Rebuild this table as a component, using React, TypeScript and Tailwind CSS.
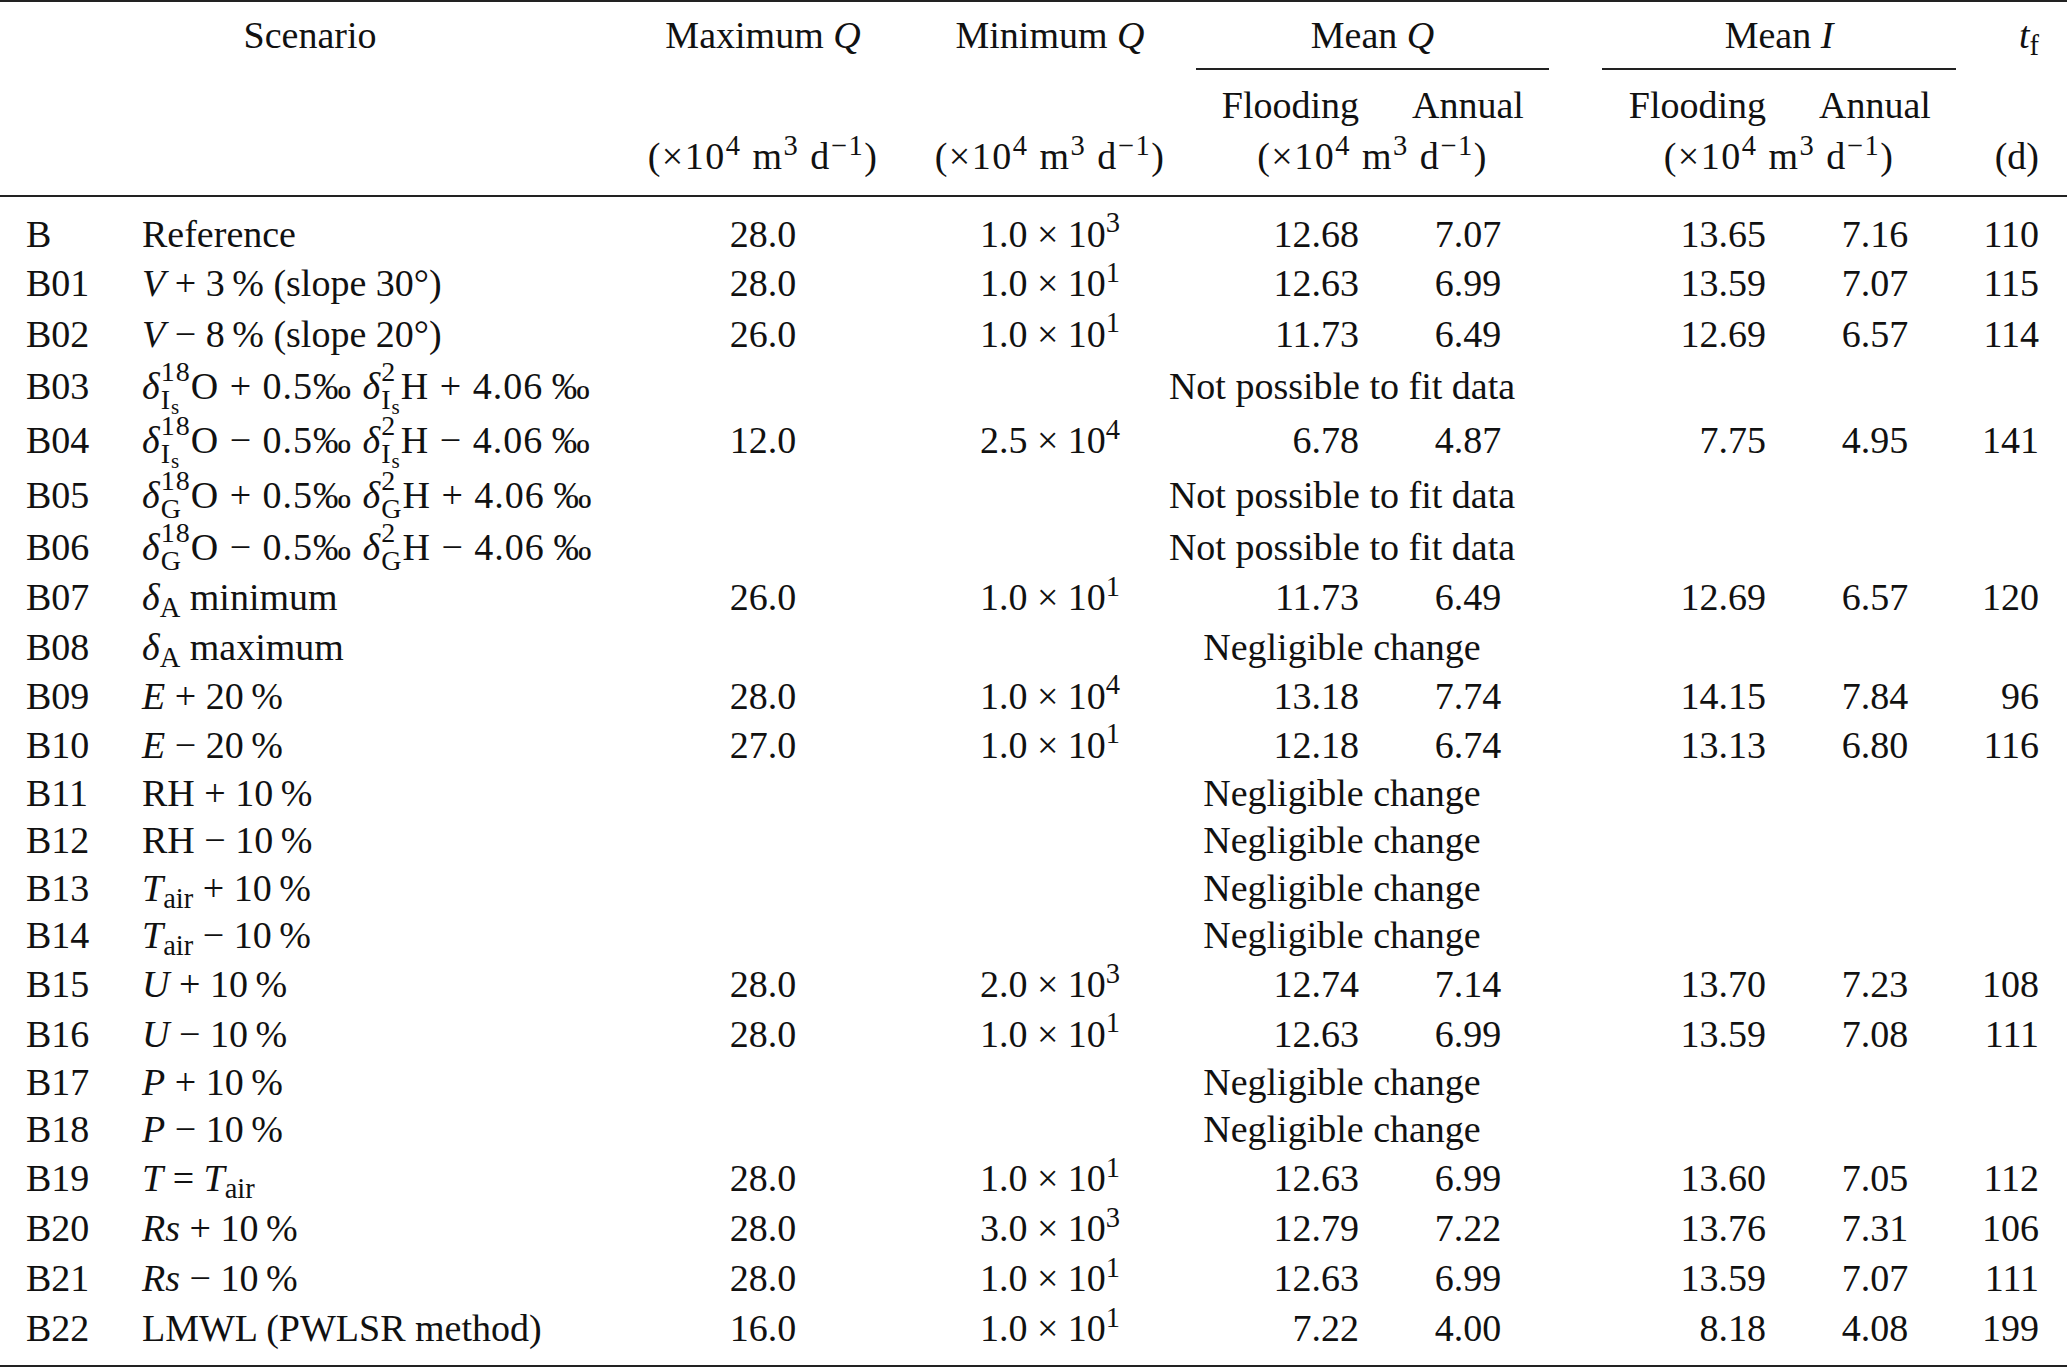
import type { ReactNode } from "react";

const grid =
  "grid grid-cols-[142px_498px_246px_310px_184px_176px_46px_185px_176px_104px]";

function Stack({ sup, sub }: { sup: ReactNode; sub: ReactNode }) {
  return (
    <span className="-my-[10px] inline-flex flex-col items-start gap-[1px] align-[18px] text-[28px] leading-[27px] not-italic">
      <span>{sup}</span>
      <span>{sub}</span>
    </span>
  );
}

const Is = (
  <>
    I<sub>s</sub>
  </>
);

function sci(m: string, e: string) {
  return (
    <span>
      {m} × 10<sup>{e}</sup>
    </span>
  );
}

const units = (
  <span className="tracking-[1.5px]">
    (×10<sup>4</sup> m<sup>3</sup> d<sup>−1</sup>)
  </span>
);

type Row = {
  id: string;
  s: ReactNode;
  h: number;
  v?: [string, ReactNode, string, string, string, string, string];
  note?: string;
};

const NP = "Not possible to fit data";
const NC = "Negligible change";

function Iso({ sub, sign }: { sub: ReactNode; sign: string }) {
  return (
    <span className="tracking-[1px]">
      <i>δ</i>
      <Stack sup="18" sub={sub} />O {sign} 0.5‰ <i>δ</i>
      <Stack sup="2" sub={sub} />H {sign} 4.06{"\u2009"}‰
    </span>
  );
}

const rows: Row[] = [
  { id: "B", s: "Reference", h: 49, v: ["28.0", sci("1.0", "3"), "12.68", "7.07", "13.65", "7.16", "110"] },
  {
    id: "B01",
    s: (
      <>
        <i>V</i> + 3{"\u2009"}% (slope 30°)
      </>
    ),
    h: 50,
    v: ["28.0", sci("1.0", "1"), "12.63", "6.99", "13.59", "7.07", "115"],
  },
  {
    id: "B02",
    s: (
      <>
        <i>V</i> − 8{"\u2009"}% (slope 20°)
      </>
    ),
    h: 51,
    v: ["26.0", sci("1.0", "1"), "11.73", "6.49", "12.69", "6.57", "114"],
  },
  { id: "B03", s: <Iso sub={Is} sign="+" />, h: 53, note: NP },
  {
    id: "B04",
    s: <Iso sub={Is} sign="−" />,
    h: 56,
    v: ["12.0", sci("2.5", "4"), "6.78", "4.87", "7.75", "4.95", "141"],
  },
  { id: "B05", s: <Iso sub="G" sign="+" />, h: 53, note: NP },
  { id: "B06", s: <Iso sub="G" sign="−" />, h: 51, note: NP },
  {
    id: "B07",
    s: (
      <>
        <i>δ</i>
        <sub>A</sub> minimum
      </>
    ),
    h: 50,
    v: ["26.0", sci("1.0", "1"), "11.73", "6.49", "12.69", "6.57", "120"],
  },
  {
    id: "B08",
    s: (
      <>
        <i>δ</i>
        <sub>A</sub> maximum
      </>
    ),
    h: 49,
    note: NC,
  },
  {
    id: "B09",
    s: (
      <>
        <i>E</i> + 20{"\u2009"}%
      </>
    ),
    h: 49,
    v: ["28.0", sci("1.0", "4"), "13.18", "7.74", "14.15", "7.84", "96"],
  },
  {
    id: "B10",
    s: (
      <>
        <i>E</i> − 20{"\u2009"}%
      </>
    ),
    h: 49,
    v: ["27.0", sci("1.0", "1"), "12.18", "6.74", "13.13", "6.80", "116"],
  },
  { id: "B11", s: <>RH + 10{"\u2009"}%</>, h: 47, note: NC },
  { id: "B12", s: <>RH − 10{"\u2009"}%</>, h: 48, note: NC },
  {
    id: "B13",
    s: (
      <>
        <i>T</i>
        <sub>air</sub> + 10{"\u2009"}%
      </>
    ),
    h: 47,
    note: NC,
  },
  {
    id: "B14",
    s: (
      <>
        <i>T</i>
        <sub>air</sub> − 10{"\u2009"}%
      </>
    ),
    h: 48,
    note: NC,
  },
  {
    id: "B15",
    s: (
      <>
        <i>U</i> + 10{"\u2009"}%
      </>
    ),
    h: 50,
    v: ["28.0", sci("2.0", "3"), "12.74", "7.14", "13.70", "7.23", "108"],
  },
  {
    id: "B16",
    s: (
      <>
        <i>U</i> − 10{"\u2009"}%
      </>
    ),
    h: 49,
    v: ["28.0", sci("1.0", "1"), "12.63", "6.99", "13.59", "7.08", "111"],
  },
  {
    id: "B17",
    s: (
      <>
        <i>P</i> + 10{"\u2009"}%
      </>
    ),
    h: 47,
    note: NC,
  },
  {
    id: "B18",
    s: (
      <>
        <i>P</i> − 10{"\u2009"}%
      </>
    ),
    h: 48,
    note: NC,
  },
  {
    id: "B19",
    s: (
      <>
        <i>T</i> = <i>T</i>
        <sub>air</sub>
      </>
    ),
    h: 50,
    v: ["28.0", sci("1.0", "1"), "12.63", "6.99", "13.60", "7.05", "112"],
  },
  {
    id: "B20",
    s: (
      <>
        <i>Rs</i> + 10{"\u2009"}%
      </>
    ),
    h: 50,
    v: ["28.0", sci("3.0", "3"), "12.79", "7.22", "13.76", "7.31", "106"],
  },
  {
    id: "B21",
    s: (
      <>
        <i>Rs</i> − 10{"\u2009"}%
      </>
    ),
    h: 50,
    v: ["28.0", sci("1.0", "1"), "12.63", "6.99", "13.59", "7.07", "111"],
  },
  { id: "B22", s: "LMWL (PWLSR method)", h: 50, v: ["16.0", sci("1.0", "1"), "7.22", "4.00", "8.18", "4.08", "199"] },
];

function BodyRow({ row }: { row: Row }) {
  return (
    <div className={`${grid} items-center leading-[44px]`} style={{ height: row.h }}>
      <div className="col-start-1 pl-[26px]">{row.id}</div>
      <div className="col-start-2">{row.s}</div>
      {row.v ? (
        <>
          <div className="col-start-3 text-center">{row.v[0]}</div>
          <div className="col-start-4 pl-[18px] text-center">{row.v[1]}</div>
          <div className="col-start-5 pr-[21px] text-right">{row.v[2]}</div>
          <div className="col-start-6 text-center">{row.v[3]}</div>
          <div className="col-start-8 pr-[21px] text-right">{row.v[4]}</div>
          <div className="col-start-9 text-center">{row.v[5]}</div>
          <div className="col-start-10 pr-[28px] text-right">{row.v[6]}</div>
        </>
      ) : (
        <div className="col-start-5 col-span-2 flex justify-center pr-[68px]">
          <span className="shrink-0">{row.note}</span>
        </div>
      )}
    </div>
  );
}

export default function App() {
  return (
    <div className="h-[1370px] w-[2067px] overflow-hidden bg-white font-['Liberation_Serif',serif] text-[38px] whitespace-nowrap text-[#111]">
      <div className="border-t-2 border-[#222] pb-[23px]">
        <div className={`${grid} grid-rows-[66px_2px_70px_32px] leading-[44px]`}>
          <div className="col-span-2 col-start-1 row-start-1 flex items-center justify-center pr-[20px]">Scenario</div>
          <div className="col-start-3 row-start-1 flex items-center justify-center">
            <span>
              Maximum <i>Q</i>
            </span>
          </div>
          <div className="col-start-4 row-start-1 flex items-center justify-center pl-[18px]">
            <span>
              Minimum <i>Q</i>
            </span>
          </div>
          <div className="col-span-2 col-start-5 row-start-1 flex items-center justify-center pr-[7px]">
            <span>
              Mean <i>Q</i>
            </span>
          </div>
          <div className="col-span-2 col-start-8 row-start-1 flex items-center justify-center pr-[7px]">
            <span>
              Mean <i>I</i>
            </span>
          </div>
          <div className="col-start-10 row-start-1 flex items-center justify-end pr-[28px]">
            <span>
              <i>t</i>
              <sub>f</sub>
            </span>
          </div>

          <div className="col-span-2 col-start-5 row-start-2 mr-[7px] bg-[#222]" />
          <div className="col-span-2 col-start-8 row-start-2 mr-[7px] bg-[#222]" />

          <div className="col-start-5 row-start-3 flex items-center justify-end pr-[21px]">Flooding</div>
          <div className="col-start-6 row-start-3 flex items-center justify-center">Annual</div>
          <div className="col-start-8 row-start-3 flex items-center justify-end pr-[21px]">Flooding</div>
          <div className="col-start-9 row-start-3 flex items-center justify-center">Annual</div>

          <div className="col-start-3 row-start-4 flex items-center justify-center">{units}</div>
          <div className="col-start-4 row-start-4 flex items-center justify-center pl-[18px]">{units}</div>
          <div className="col-span-2 col-start-5 row-start-4 flex items-center justify-center pr-[7px]">{units}</div>
          <div className="col-span-2 col-start-8 row-start-4 flex items-center justify-center pr-[7px]">{units}</div>
          <div className="col-start-10 row-start-4 flex items-center justify-end pr-[28px]">(d)</div>
        </div>
      </div>
      <div className="border-t-2 border-b-2 border-[#222] pt-[12px] pb-[12px]">
        {rows.map((r) => (
          <BodyRow key={r.id} row={r} />
        ))}
      </div>
    </div>
  );
}
